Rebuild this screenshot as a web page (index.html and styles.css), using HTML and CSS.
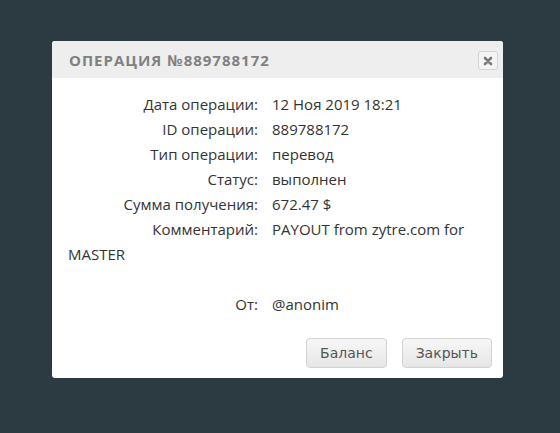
FILE: index.html
```html
<!DOCTYPE html>
<html lang="ru">
<head>
    <meta charset="UTF-8">
    <title>Операция №889788172</title>
    <link rel="stylesheet" href="styles.css">
</head>
<body>
    <div class="overlay">
        <div class="dialog">
            <div class="dialog-head">
                <span class="dialog-title">ОПЕРАЦИЯ №889788172</span>
                <button class="close-btn" title="Закрыть">
                    <svg width="10" height="10" viewBox="0 0 10 10">
                        <path d="M2 2 L8 8 M8 2 L2 8" stroke="#7a7a7a" stroke-width="2.6" stroke-linecap="round"/>
                    </svg>
                </button>
            </div>
            <div class="dialog-body">
                <div class="row"><span class="label">Дата операции:</span>12 Ноя 2019 18:21</div>
                <div class="row"><span class="label">ID операции:</span>889788172</div>
                <div class="row"><span class="label">Тип операции:</span>перевод</div>
                <div class="row"><span class="label">Статус:</span>выполнен</div>
                <div class="row"><span class="label">Сумма получения:</span>672.47 $</div>
                <div class="row"><span class="label">Комментарий:</span>PAYOUT from zytre.com for MASTER</div>
                <div class="row"></div>
                <div class="row"><span class="label">От:</span>@anonim</div>
            </div>
            <div class="dialog-foot">
                <button class="btn">Баланс</button>
                <button class="btn">Закрыть</button>
            </div>
        </div>
    </div>
</body>
</html>
```

FILE: styles.css
```css
body, html {
    margin: 0;
    padding: 0;
    height: 100%;
    overflow: hidden;
}
body {
    background-color: #2c3a42;
    font-family: "Open Sans", Arial, sans-serif;
}
.overlay {
    padding: 41px 0 0 52px;
}
.dialog {
    width: 451px;
    background-color: #fff;
    border-radius: 3px;
    overflow: hidden;
}
.dialog-head {
    height: 37px;
    display: flex;
    align-items: center;
    justify-content: space-between;
    padding: 0 5px 0 17px;
    background-color: #eeeeee;
}
.dialog-title {
    font-size: 15px;
    font-weight: bold;
    letter-spacing: 1px;
    color: #808080;
}
.close-btn {
    display: flex;
    align-items: center;
    justify-content: center;
    width: 20px;
    height: 19px;
    padding: 0;
    margin-top: 2px;
    border: 1px solid #d4d4d4;
    border-radius: 3px;
    background-color: #f4f4f4;
    cursor: pointer;
}
.dialog-body {
    padding: 14px 16px 0;
    font-size: 15px;
    color: #333;
}
.row {
    min-height: 25px;
    line-height: 25px;
}
.label {
    display: inline-block;
    width: 190px;
    margin-right: 14px;
    text-align: right;
}
.dialog-foot {
    display: flex;
    justify-content: flex-end;
    gap: 15px;
    padding: 21px 11px 10px;
}
.btn {
    height: 30px;
    padding: 0 13px;
    border: 1px solid #d2d2d2;
    border-radius: 4px;
    background: linear-gradient(#f7f7f7, #e6e6e6);
    color: #555;
    font-family: "DejaVu Sans", sans-serif;
    font-size: 14px;
    cursor: pointer;
}
```
